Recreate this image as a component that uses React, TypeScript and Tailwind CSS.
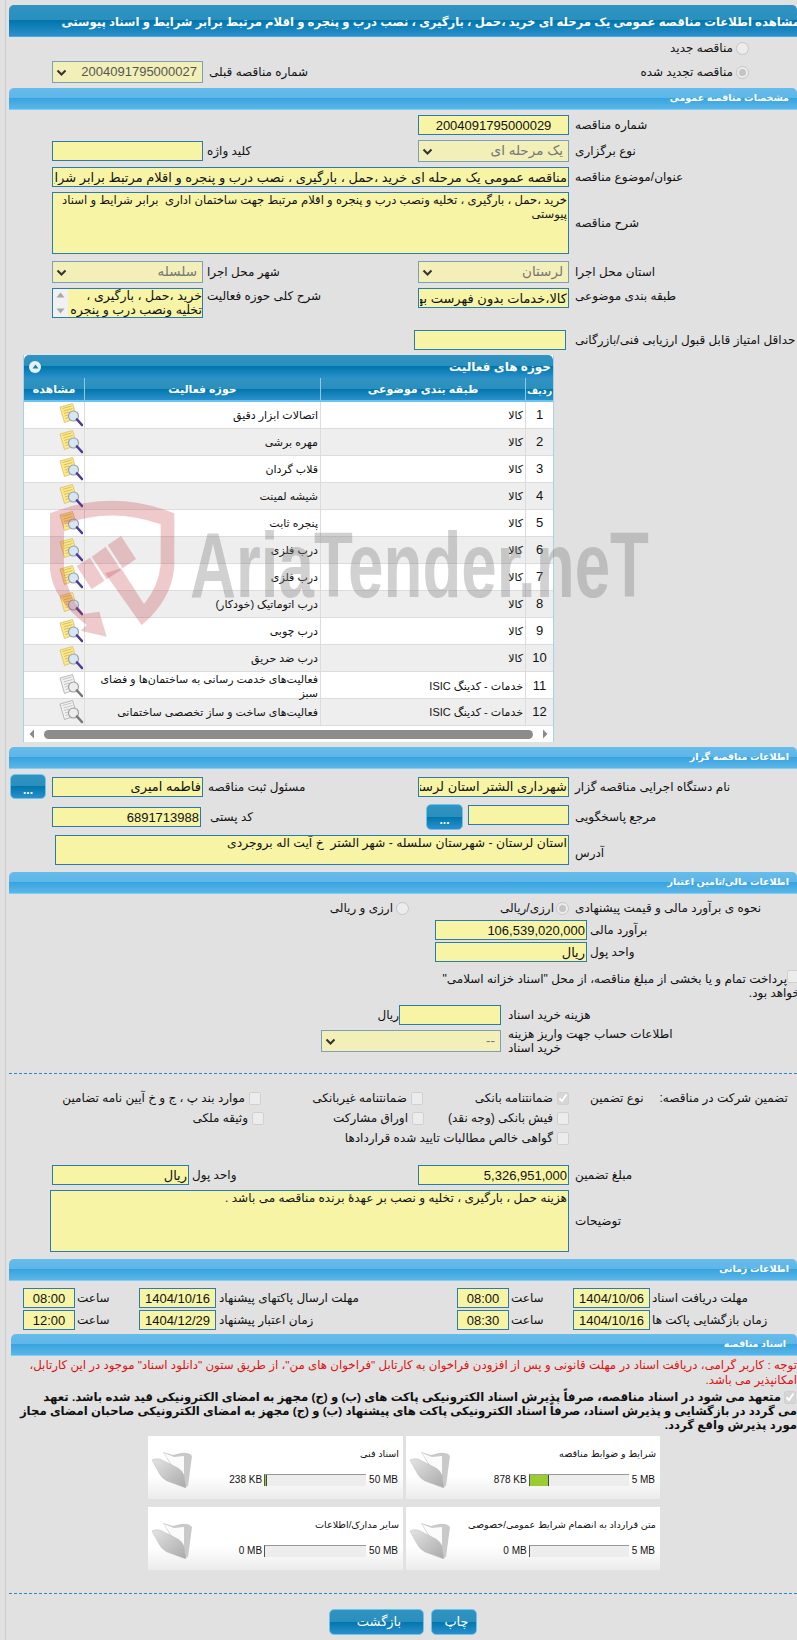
import React from "react";

const headGrad = "bg-[linear-gradient(to_bottom,#3094c2_0%,#2b8fbe_48%,#0076ad_50%,#2b90cc_100%)]";
const barGrad = "bg-[linear-gradient(to_bottom,#66bcea_0%,#5eb6e8_48%,#38a4df_50%,#5ab6e9_100%)]";
const inputBase = "block shrink-0 bg-[#f7f5a5] border border-[#2a7cab] px-[1px] text-[#111] outline-none";

function Inp({ w, v = "", c }: { w: string; v?: string; c?: boolean }) {
  return (
    <input
      readOnly
      dir="rtl"
      value={v}
      className={`${inputBase} h-[20px] text-[13px] ${c ? "text-center" : "text-right"} ${w}`}
    />
  );
}

function Sel({ w, v, num }: { w: string; v: string; num?: boolean }) {
  return (
    <div className={`flex h-[22px] shrink-0 items-center justify-between border border-[#7f9fb5] bg-[#f2efb8] pl-[3px] pr-[5px] ${w} ${num ? "text-[13px] text-[#555]" : "text-[13.5px] text-[#777]"}`}>
      <svg width="11" height="7" viewBox="0 0 11 7"><path d="M1.5 1.5 L5.5 5.5 L9.5 1.5" fill="none" stroke="#333" strokeWidth="2" /></svg>
      <span dir="rtl" className="whitespace-nowrap">{v}</span>
    </div>
  );
}

function L({ children, className = "" }: { children: React.ReactNode; className?: string }) {
  return <span dir="rtl" className={`shrink-0 whitespace-nowrap text-[12px] leading-[14px] text-[#111] ${className}`}>{children}</span>;
}

function Bar({ t, className = "" }: { t: string; className?: string }) {
  return (
    <div dir="rtl" className={`flex h-[22px] items-center rounded-t-[5px] border-b border-[#84ccf0] pr-[8px] text-[9.5px] font-bold text-white ${barGrad} ${className}`}>
      <span className="whitespace-nowrap">{t}</span>
    </div>
  );
}

function Radio({ on }: { on?: boolean }) {
  return (
    <span className="flex h-[13px] w-[13px] shrink-0 items-center justify-center rounded-full border border-[#c6c6c6] bg-[#ececec]">
      {on && <span className="h-[7px] w-[7px] rounded-full bg-[#c4c4c4]" />}
    </span>
  );
}

function Chk({ on }: { on?: boolean }) {
  return (
    <span className={`flex h-[13px] w-[12px] shrink-0 items-center justify-center rounded-[2px] border border-[#d0d0d0] ${on ? "bg-[#d6d6d6]" : "bg-[#ececec]"}`}>
      {on && <svg width="10" height="10" viewBox="0 0 10 10"><path d="M1.5 5.5 L4 8 L8.5 1.5" fill="none" stroke="#fff" strokeWidth="1.8" /></svg>}
    </span>
  );
}

function DocIcon({ gray }: { gray?: boolean }) {
  const fill = gray ? "#f2f2f2" : "#fbe98e";
  const edge = gray ? "#a8a8a8" : "#d9bf62";
  const line = gray ? "#bdbdbd" : "#d8b84f";
  return (
    <svg width="24" height="24" viewBox="0 0 24 24" className="shrink-0">
      <path d="M1 4 L13.5 0.5 L18 15 L5.5 19.5 Z" fill={fill} stroke={edge} strokeWidth="0.8" />
      <path d="M3.5 5.5 L12.5 3 M4.5 8 L13.5 5.5 M5 10.5 L10 9 M5.8 13 L9 12 M6.5 15.5 L9 14.8" stroke={line} strokeWidth="0.9" />
      <circle cx="14.5" cy="13" r="5" fill={gray ? "#ececec" : "#d8e6f2"} stroke={gray ? "#9a9a9a" : "#8f9fb5"} strokeWidth="1.1" />
      <path d="M18 16.5 L23 22" stroke={gray ? "#777" : "#4b3a92"} strokeWidth="2.6" strokeLinecap="round" />
    </svg>
  );
}

function Folder() {
  return (
    <svg width="41" height="38" viewBox="0 0 41 38" className="shrink-0">
      <defs>
        <linearGradient id="fo" x1="0" y1="0" x2="1" y2="1">
          <stop offset="0" stopColor="#e4e4e4" />
          <stop offset="1" stopColor="#a9a9a9" />
        </linearGradient>
      </defs>
      <path d="M12 2 L22 5 L30 3 Q38 2 41 6 L37 36 L33 37 Z" fill="#c9c9c9" />
      <path d="M13 3 L23 7 L33 6 L33 25 L20 14 Z" fill="#fbfbfb" />
      <path d="M1 10 Q7 7 13 11 L27 18 Q32 21 33 26 L35 38 L16 31 Q10 28 7 21 Z" fill="url(#fo)" stroke="#bdbdbd" strokeWidth="0.5" />
    </svg>
  );
}

function Prog({ w, fill, a, b }: { w: string; fill?: string; a: string; b: string }) {
  return (
    <div className="flex items-center justify-end pr-[5px] text-[10px] leading-[14px] text-[#111]">
      <span className="mr-[2px] whitespace-nowrap">{a}</span>
      <div className={`flex h-[12px] border-t border-t-[#999] border-l border-l-[#555] bg-[#ededed] ${w}`}>
        {fill && <div className={`h-full border-r border-r-[#444] bg-[#9acd32] ${fill}`} />}
      </div>
      <span className="ml-[3px] whitespace-nowrap">{b}</span>
    </div>
  );
}

function Card({ w, t, pw, fill, a, b }: { w: string; t: string; pw: string; fill?: string; a: string; b: string }) {
  return (
    <div className={`flex h-[63px] shrink-0 bg-[linear-gradient(to_bottom,#ffffff_0%,#ffffff_62%,#ececec_100%)] ${w}`}>
      <div className="ml-[3px] mt-[14px]"><Folder /></div>
      <div className="flex-1">
        <div dir="rtl" className="mt-[11px] h-[14px] whitespace-nowrap pr-[4px] text-[9.6px] leading-[14px] text-[#111]">{t}</div>
        <div className="mt-[12px]"><Prog w={pw} fill={fill} a={a} b={b} /></div>
      </div>
    </div>
  );
}

function Btn({ w, h, children }: { w: string; h: string; children: React.ReactNode }) {
  return (
    <div className={`flex shrink-0 items-center justify-center rounded-[5px] border border-[#6cc4ee] text-white ${headGrad} ${w} ${h}`}>
      {children}
    </div>
  );
}

const rows: [string, string, string, boolean?][] = [
  ["1", "کالا", "اتصالات ابزار دقیق"],
  ["2", "کالا", "مهره برشی"],
  ["3", "کالا", "قلاب گردان"],
  ["4", "کالا", "شیشه لمینت"],
  ["5", "کالا", "پنجره ثابت"],
  ["6", "کالا", "درب فلزی"],
  ["7", "کالا", "درب فلزی"],
  ["8", "کالا", "درب اتوماتیک (خودکار)"],
  ["9", "کالا", "درب چوبی"],
  ["10", "کالا", "درب ضد حریق"],
  ["11", "خدمات - کدینگ ISIC", "فعالیت‌های خدمت رسانی به ساختمان‌ها و فضای سبز", true],
  ["12", "خدمات - کدینگ ISIC", "فعالیت‌های ساخت و ساز تخصصی ساختمانی", true],
];

function Table() {
  return (
    <div className="ml-[14px] mt-[5px] w-[531px] border-x border-[#a6d0ea] bg-white">
      <div dir="rtl" className={`flex h-[23px] items-center justify-between rounded-t-[5px] pl-[5px] pr-[2px] text-[12px] font-bold text-white ${headGrad}`}>
        <span className="whitespace-nowrap">حوزه های فعالیت</span>
        <span className="flex h-[12px] w-[12px] items-center justify-center rounded-full bg-[#e8f2f8]">
          <svg width="7" height="5" viewBox="0 0 7 5"><path d="M0.5 4.5 L3.5 0.5 L6.5 4.5 Z" fill="#1e7fae" /></svg>
        </span>
      </div>
      <div className={`grid h-[24px] grid-cols-[60px_236px_205px_28px] border-b-2 border-[#6cc4ee] text-[11px] font-bold text-white ${headGrad}`}>
        <div dir="rtl" className="flex items-center justify-center whitespace-nowrap">مشاهده</div>
        <div dir="rtl" className="flex items-center justify-center whitespace-nowrap border-l border-[#8fcbe8]">حوزه فعالیت</div>
        <div dir="rtl" className="flex items-center justify-center whitespace-nowrap border-l border-[#8fcbe8]">طبقه بندی موضوعی</div>
        <div dir="rtl" className="flex items-center justify-center whitespace-nowrap border-l border-[#8fcbe8] pt-[4px] text-[9.5px]">ردیف</div>
      </div>
      {rows.map((r, i) => (
        <div key={r[0]} className={`grid h-[27px] grid-cols-[60px_236px_205px_28px] border-b border-[#dcdcdc] text-[11px] leading-[14px] text-[#111] ${i % 2 ? "bg-[#eeeeee]" : "bg-white"}`}>
          <div className="flex items-center justify-end pr-[1px]"><DocIcon gray={r[3]} /></div>
          <div dir="rtl" className="flex items-center border-l border-[#dcdcdc] pl-[4px] pr-[2px]">{r[2]}</div>
          <div dir="rtl" className="flex items-center whitespace-nowrap border-l border-[#dcdcdc] pr-[2px]">{r[1]}</div>
          <div className="flex items-center justify-center border-l border-[#dcdcdc] text-[13px]">{r[0]}</div>
        </div>
      ))}
      <div className="flex h-[16px] items-center justify-between px-[5px]">
        <svg width="6" height="10" viewBox="0 0 6 10"><path d="M5 0.5 L0.5 5 L5 9.5 Z" fill="#8a8a8a" /></svg>
        <div className="h-[9px] w-[489px] rounded-full bg-[#8c8c8c]" />
        <svg width="6" height="10" viewBox="0 0 6 10"><path d="M1 0.5 L5.5 5 L1 9.5 Z" fill="#8a8a8a" /></svg>
      </div>
    </div>
  );
}

function Watermark() {
  return (
    <div className="pointer-events-none absolute left-[40px] top-[490px] z-10 h-[160px] w-[620px]">
      <svg width="150" height="160" viewBox="0 0 450 480" className="absolute left-0 top-0">
        <g fill="#be323c" fillOpacity="0.26">
          <path d="M30 70 Q215 -5 403 70 L403 230 Q395 330 305 405 L195 250 L243 235 L312 342 Q355 290 362 225 L362 103 Q215 50 72 103 L72 240 Q80 310 130 372 L178 365 L200 440 L122 422 L140 405 Q40 330 30 240 Z" />
          <path d="M110 228 L150 203 L193 272 L155 298 Z" />
          <path d="M155 200 L197 170 L243 240 L200 268 Z" />
          <path d="M203 165 L243 138 L288 207 L248 235 Z" />
        </g>
      </svg>
      <div className="absolute left-[150px] top-[22px] origin-left scale-x-[0.685] whitespace-nowrap text-[93px] font-bold leading-[106px] text-[#7a7a7a]/35 [font-family:'Liberation_Sans',sans-serif]">
        AriaTender.neT
      </div>
    </div>
  );
}

export default function App() {
  return (
    <div className="relative h-[1640px] w-[797px] overflow-hidden bg-[#e1e1e1] [font-family:'Liberation_Sans','DejaVu_Sans',sans-serif]">
      <div className="ml-[5px] h-full border-l border-[#cdcdcd] pl-[3px] pt-[5px]">
        <div dir="rtl" className={`flex h-[32px] items-center justify-start overflow-hidden rounded-t-[5px] border-b border-[#4aa8e0] pt-[2px] text-[11.6px] font-bold text-white ${headGrad}`}>
          <span className="-mr-[3px] whitespace-nowrap">مشاهده اطلاعات مناقصه عمومی یک مرحله ای خرید ،حمل ، بارگیری ، نصب درب و پنجره و اقلام مرتبط برابر شرایط و اسناد پیوستی</span>
        </div>

        <div className="flex h-[22px] items-center justify-end pr-[48px]">
          <L className="mr-[3px]">مناقصه جدید</L>
          <Radio />
        </div>
        <div className="mt-[2px] flex h-[22px] items-center pl-[43px] pr-[48px]">
          <Sel w="w-[151px]" v="2004091795000027" num />
          <L className="ml-[6px]">شماره مناقصه قبلی</L>
          <div className="ml-auto flex items-center">
            <L className="mr-[3px]">مناقصه تجدید شده</L>
            <Radio on />
          </div>
        </div>

        <Bar t="مشخصات مناقصه عمومی" className="mt-[5px]" />

        <div className="mt-[5px] flex h-[20px] items-center pl-[409px]">
          <Inp w="w-[151px]" v="2004091795000029" c />
          <L className="ml-[6px]">شماره مناقصه</L>
        </div>
        <div className="mt-[5px] flex h-[22px] items-center pl-[43px]">
          <div className="flex w-[366px] items-center">
            <Inp w="w-[151px]" />
            <L className="ml-[4px]">کلید واژه</L>
          </div>
          <Sel w="w-[151px]" v="یک مرحله ای" />
          <L className="ml-[6px]">نوع برگزاری</L>
        </div>
        <div className="mt-[5px] flex h-[20px] items-center pl-[43px]">
          <Inp w="w-[517px]" v="مناقصه عمومی یک مرحله ای خرید ،حمل ، بارگیری ، نصب درب و پنجره و اقلام مرتبط برابر شرایط و اسناد پیوستی" />
          <L className="ml-[6px]">عنوان/موضوع مناقصه</L>
        </div>
        <div className="mt-[5px] flex h-[62px] items-center pl-[43px]">
          <textarea
            readOnly
            dir="rtl"
            value="خرید ،حمل ، بارگیری ، تخلیه ونصب درب و پنجره و اقلام مرتبط جهت ساختمان اداری  برابر شرایط و اسناد پیوستی"
            className={`${inputBase} h-[62px] w-[517px] resize-none overflow-hidden text-right text-[11.6px] leading-[14px]`}
          />
          <L className="ml-[6px]">شرح مناقصه</L>
        </div>
        <div className="mt-[7px] flex h-[22px] items-center pl-[43px]">
          <div className="flex w-[366px] items-center">
            <Sel w="w-[151px]" v="سلسله" />
            <L className="ml-[4px]">شهر محل اجرا</L>
          </div>
          <Sel w="w-[151px]" v="لرستان" />
          <L className="ml-[6px]">استان محل اجرا</L>
        </div>
        <div className="mt-[5px] flex h-[30px] items-start pl-[43px]">
          <div className="flex w-[366px] items-start">
            <div className="flex h-[30px] w-[151px] shrink-0 overflow-hidden border border-[#2a7cab] bg-[#f7f5a5]">
              <div className="flex w-[15px] shrink-0 flex-col items-center justify-between bg-[#f1f1f1] py-[3px]">
                <svg width="9" height="6" viewBox="0 0 9 6"><path d="M0.5 5.5 L4.5 0.5 L8.5 5.5 Z" fill="#a8a8a8" /></svg>
                <svg width="9" height="6" viewBox="0 0 9 6"><path d="M0.5 0.5 L4.5 5.5 L8.5 0.5 Z" fill="#a8a8a8" /></svg>
              </div>
              <div dir="rtl" className="min-w-0 flex-1 overflow-hidden whitespace-nowrap text-[12.6px] leading-[14px] text-[#111]">
                <div>خرید ،حمل ، بارگیری ،</div>
                <div>تخلیه ونصب درب و پنجره و</div>
              </div>
            </div>
            <L className="ml-[4px] mt-[1px]">شرح کلی حوزه فعالیت</L>
          </div>
          <Inp w="w-[151px]" v="کالا،خدمات بدون فهرست بها" />
          <L className="ml-[6px] mt-[1px]">طبقه بندی موضوعی</L>
        </div>
        <div className="mt-[12px] flex h-[20px] items-center pl-[405px]">
          <Inp w="w-[152px]" />
          <L className="ml-[9px]">حداقل امتیاز قابل قبول ارزیابی فنی/بازرگانی</L>
        </div>

        <Table />

        <Bar t="اطلاعات مناقصه گزار" className="mt-[5px]" />
        <div className="mt-[5px] flex h-[25px] items-center pl-[1px]">
          <Btn w="w-[36px]" h="h-[25px]"><span className="mt-[6px] text-[12px] font-bold leading-[12px]">...</span></Btn>
          <div className="ml-[6px] flex w-[366px] items-center">
            <Inp w="w-[151px]" v="فاطمه امیری" />
            <L className="ml-[5px]">مسئول ثبت مناقصه</L>
          </div>
          <Inp w="w-[151px]" v="شهرداری الشتر استان لرستان" />
          <L className="ml-[6px]">نام دستگاه اجرایی مناقصه گزار</L>
        </div>
        <div className="mt-[5px] flex h-[26px] items-center pl-[43px]">
          <div className="flex w-[374px] items-center">
            <Inp w="w-[149px]" v="6891713988" />
            <L className="ml-[9px]">کد پستی</L>
          </div>
          <Btn w="w-[37px]" h="h-[26px]"><span className="mt-[6px] text-[12px] font-bold leading-[12px]">...</span></Btn>
          <div className="mb-[5px] ml-[5px]"><Inp w="w-[101px]" /></div>
          <L className="ml-[6px]">مرجع پاسخگویی</L>
        </div>
        <div className="mt-[5px] flex h-[30px] items-center pl-[46px]">
          <textarea
            readOnly
            dir="rtl"
            value="استان لرستان - شهرستان سلسله - شهر الشتر  خ آیت اله بروجردی"
            className={`${inputBase} h-[30px] w-[514px] resize-none overflow-hidden text-right text-[12.3px] leading-[14px]`}
          />
          <L className="ml-[6px] mt-[5px]">آدرس</L>
        </div>

        <Bar t="اطلاعات مالی/تامین اعتبار" className="mt-[7px]" />
        <div className="mt-[6px] flex h-[16px] items-center">
          <div className="flex w-[400px] items-center justify-end">
            <L className="mr-[3px]">ارزی و ریالی</L>
            <Radio />
          </div>
          <div className="flex w-[160px] items-center justify-end">
            <L className="mr-[2px]">ارزی/ریالی</L>
            <Radio on />
          </div>
          <L className="ml-[6px]">نحوه ی برآورد مالی و قیمت پیشنهادی</L>
        </div>
        <div className="mt-[4px] flex h-[20px] items-center pl-[426px]">
          <Inp w="w-[152px]" v="106,539,020,000" />
          <L className="ml-[3px]">برآورد مالی</L>
        </div>
        <div className="mt-[2px] flex h-[20px] items-center pl-[426px]">
          <Inp w="w-[152px]" v="ریال" />
          <L className="ml-[3px]">واحد پول</L>
        </div>
        <div className="mt-[8px] flex h-[16px] items-start justify-end">
          <L className="mt-[2px]">پرداخت تمام و یا بخشی از مبلغ مناقصه، از محل "اسناد خزانه اسلامی"</L>
          <div className="-mr-[2px]"><Chk /></div>
        </div>
        <div className="flex h-[14px] items-center justify-end">
          <L className="-mr-[3px]">خواهد بود.</L>
        </div>
        <div className="mt-[5px] flex h-[20px] items-center pl-[371px]">
          <L className="w-[19px] text-right">ریال</L>
          <Inp w="w-[102px]" />
          <L className="ml-[7px]">هزینه خرید اسناد</L>
        </div>
        <div className="mt-[5px] flex h-[22px] items-center pl-[312px]">
          <Sel w="w-[180px]" v="--" />
          <div className="ml-[7px] -mt-[1px] flex flex-col items-start">
            <L>اطلاعات حساب جهت واریز هزینه</L>
            <L>خرید اسناد</L>
          </div>
        </div>

        <div className="mt-[21px] border-t border-dashed border-[#2e8bc0]" />

        <div className="mt-[14px] flex h-[20px] items-center">
          <div className="flex w-[252px] items-center justify-end"><L className="mr-[4px]">موارد بند پ ، ج و خ آیین نامه تضامین</L><Chk /></div>
          <div className="flex w-[162px] items-center justify-end"><L className="mr-[4px]">ضمانتنامه غیربانکی</L><Chk /></div>
          <div className="flex w-[146px] items-center justify-end"><L className="mr-[4px]">ضمانتنامه بانکی</L><Chk on /></div>
          <L className="ml-[21px]">نوع تضمین</L>
          <L className="ml-[16px]">تضمین شرکت در مناقصه:</L>
        </div>
        <div className="flex h-[20px] items-center">
          <div className="flex w-[255px] items-center justify-end"><L className="mr-[4px]">وثیقه ملکی</L><Chk /></div>
          <div className="flex w-[160px] items-center justify-end"><L className="mr-[4px]">اوراق مشارکت</L><Chk /></div>
          <div className="flex w-[145px] items-center justify-end"><L className="mr-[4px]">فیش بانکی (وجه نقد)</L><Chk /></div>
        </div>
        <div className="flex h-[20px] items-center">
          <div className="flex w-[560px] items-center justify-end"><L className="mr-[4px]">گواهی خالص مطالبات تایید شده قراردادها</L><Chk /></div>
        </div>

        <div className="mt-[17px] flex h-[20px] items-center pl-[43px]">
          <div className="flex w-[366px] items-center">
            <Inp w="w-[137px]" v="ریال" />
            <L className="ml-[3px]">واحد پول</L>
          </div>
          <Inp w="w-[151px]" v="5,326,951,000" />
          <L className="ml-[6px]">مبلغ تضمین</L>
        </div>
        <div className="mt-[5px] flex h-[62px] items-center pl-[41px]">
          <textarea
            readOnly
            dir="rtl"
            value="هزینه حمل ، بارگیری ، تخلیه و نصب بر عهدۀ برنده مناقصه می باشد ."
            className={`${inputBase} h-[62px] w-[519px] resize-none overflow-hidden text-right text-[12.1px] leading-[14px]`}
          />
          <L className="ml-[6px]">توضیحات</L>
        </div>

        <Bar t="اطلاعات زمانی" className="mt-[7px]" />
        {[
          ["08:00", "1404/10/16", "مهلت ارسال پاکتهای پیشنهاد", "08:00", "1404/10/06", "مهلت دریافت اسناد"],
          ["12:00", "1404/12/29", "زمان اعتبار پیشنهاد", "08:30", "1404/10/16", "زمان بازگشایی پاکت ها"],
        ].map((r, i) => (
          <div key={r[2]} className={`flex h-[20px] items-center pl-[14px] ${i === 0 ? "mt-[7px]" : "mt-[2px]"}`}>
            <div className="flex w-[434px] items-center">
              <Inp w="w-[52px]" v={r[0]} c />
              <L className="ml-[2px] w-[62px] text-left">ساعت</L>
              <Inp w="w-[77px]" v={r[1]} c />
              <L className="ml-[3px]">{r[2]}</L>
            </div>
            <Inp w="w-[52px]" v={r[3]} c />
            <L className="ml-[2px] w-[62px] text-left">ساعت</L>
            <Inp w="w-[77px]" v={r[4]} c />
            <L className="ml-[2px]">{r[5]}</L>
          </div>
        ))}

        <Bar t="اسناد مناقصه" className="ml-[2px] mt-[4px] !pr-[11px]" />

        <div className="mt-[2px] text-[11.8px] leading-[15px] text-[#e01010]">
          <div dir="rtl" className="whitespace-nowrap">توجه : کاربر گرامی، دریافت اسناد در مهلت قانونی و پس از افزودن فراخوان به کارتابل "فراخوان های من"، از طریق ستون "دانلود اسناد" موجود در این کارتابل،</div>
          <div dir="rtl" className="whitespace-nowrap">امکانپذیر می باشد.</div>
        </div>
        <div className="mt-[2px] text-[11.7px] font-bold leading-[14px] text-[#111]">
          <div className="flex items-center justify-end">
            <span dir="rtl" className="whitespace-nowrap">متعهد می شود در اسناد مناقصه، صرفاً پذیرش اسناد الکترونیکی پاکت های (ب) و (ج) مجهز به امضای الکترونیکی قید شده باشد. تعهد</span>
            <span className="ml-[3px] mr-[1px]"><Chk on /></span>
          </div>
          <div dir="rtl" className="whitespace-nowrap">می گردد در بازگشایی و پذیرش اسناد، صرفاً اسناد الکترونیکی پاکت های پیشنهاد (ب) و (ج) مجهز به امضای الکترونیکی صاحبان امضای مجاز</div>
          <div dir="rtl" className="whitespace-nowrap">مورد پذیرش واقع گردد.</div>
        </div>

        <div className="mt-[4px] flex gap-[3px] pl-[139px]">
          <Card w="w-[255px]" t="اسناد فنی" pw="w-[102px]" fill="w-[2px]" a="238 KB" b="50 MB" />
          <Card w="w-[254px]" t="شرایط و ضوابط مناقصه" pw="w-[100px]" fill="w-[19px]" a="878 KB" b="5 MB" />
        </div>
        <div className="mt-[8px] flex gap-[3px] pl-[139px]">
          <Card w="w-[255px]" t="سایر مدارک/اطلاعات" pw="w-[102px]" a="0 MB" b="50 MB" />
          <Card w="w-[254px]" t="متن قرارداد به انضمام شرایط عمومی/خصوصی" pw="w-[100px]" a="0 MB" b="5 MB" />
        </div>

        <div className="mt-[23px] border-t border-dashed border-[#2e8bc0]" />

        <div className="mt-[15px] flex gap-[7px] pl-[320px]">
          <Btn w="w-[95px]" h="h-[26px]"><span className="pl-[5px] text-[13px]">بازگشت</span></Btn>
          <Btn w="w-[46px]" h="h-[26px]"><span className="pl-[5px] text-[13px]">چاپ</span></Btn>
        </div>
      </div>
      <Watermark />
    </div>
  );
}
